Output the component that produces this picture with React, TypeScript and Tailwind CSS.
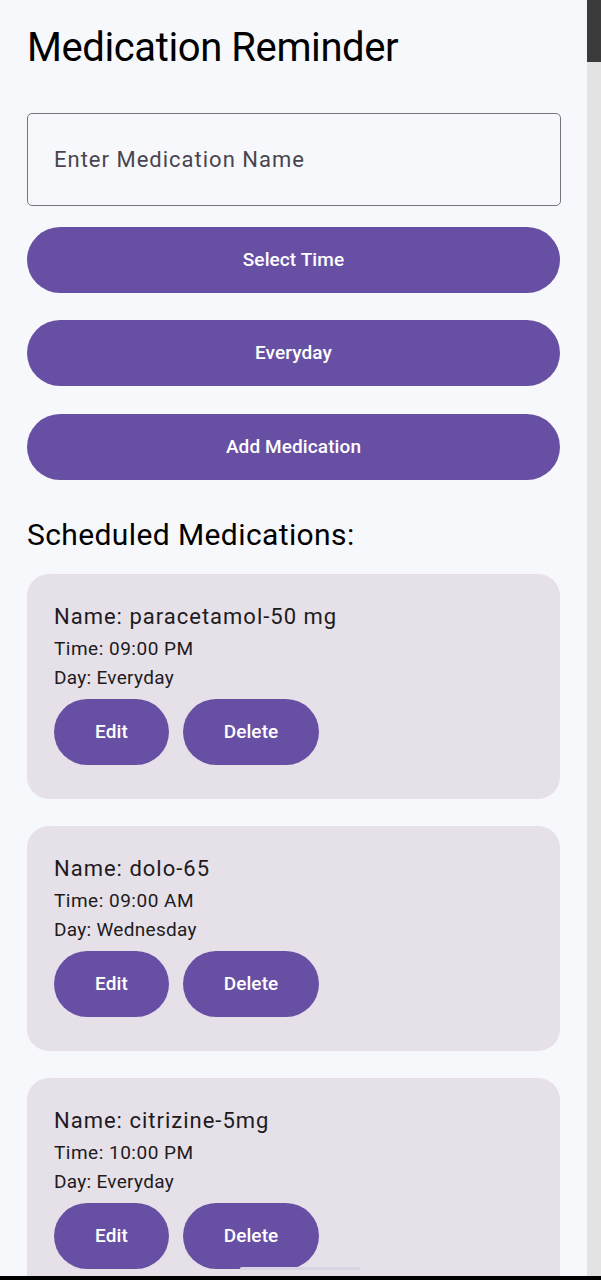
import React from 'react';

interface Med {
  name: string;
  time: string;
  day: string;
}

const meds: Med[] = [
  { name: 'paracetamol-50 mg', time: '09:00 PM', day: 'Everyday' },
  { name: 'dolo-65', time: '09:00 AM', day: 'Wednesday' },
  { name: 'citrizine-5mg', time: '10:00 PM', day: 'Everyday' },
];

const font = { fontFamily: 'Roboto, "Noto Sans", sans-serif' };

const PillButton: React.FC<{ label: string; className?: string }> = ({ label, className = '' }) => (
  <button
    className={`h-[66px] rounded-full bg-[#6750a4] text-white text-[19px] font-medium tracking-[0.1px] ${className}`}
  >
    {label}
  </button>
);

const MedCard: React.FC<{ med: Med }> = ({ med }) => (
  <div className="rounded-[22px] bg-[#e6e0e9] px-[27px] pt-[26px] pb-[34px]">
    <div className="text-[22px] leading-[34px] tracking-[1px] text-[#1d1b20]">Name: {med.name}</div>
    <div className="text-[19px] leading-[29px] tracking-[0.5px] text-[#1d1b20]">Time: {med.time}</div>
    <div className="text-[19px] leading-[29px] tracking-[0.3px] text-[#1d1b20]">Day: {med.day}</div>
    <div className="mt-[7px] flex gap-[14px]">
      <PillButton label="Edit" className="w-[115px]" />
      <PillButton label="Delete" className="w-[136px]" />
    </div>
  </div>
);

export default function App() {
  return (
    <div className="relative flex h-[1280px] w-[601px] flex-col overflow-hidden bg-[#f7f8fb]" style={font}>
      <div className="flex min-h-0 flex-1">
        <main className="w-[587px] overflow-hidden px-[27px] pt-[24px]">
          <h1 className="text-[40px] leading-[48px] tracking-[-0.4px] text-black">Medication Reminder</h1>

          <div className="mt-[41px] flex h-[93px] w-[534px] items-center rounded-[5px] border border-[#79747e] px-[26px]">
            <span className="text-[22px] tracking-[1px] text-[#49454f]">Enter Medication Name</span>
          </div>

          <div className="mt-[21px] flex flex-col">
            <PillButton label="Select Time" className="w-full" />
            <PillButton label="Everyday" className="mt-[27px] w-full" />
            <PillButton label="Add Medication" className="mt-[28px] w-full" />
          </div>

          <h2 className="mt-[37px] text-[30px] leading-[36px] tracking-[0.4px] text-black">Scheduled Medications:</h2>

          <div className="mt-[21px] flex flex-col gap-[27px]">
            {meds.map((m) => (
              <MedCard key={m.name} med={m} />
            ))}
          </div>
        </main>

        {/* scrollbar */}
        <div className="flex w-[14px] flex-col bg-[#e3e3e3]">
          <div className="h-[62px] bg-[#3b3b3b]" />
        </div>
      </div>
      <div className="h-[4px] bg-black" />

      {/* gesture handle */}
      <div className="absolute bottom-[10px] left-[240px] h-[3px] w-[120px] rounded-full bg-[#d9d4e4]" />
    </div>
  );
}
